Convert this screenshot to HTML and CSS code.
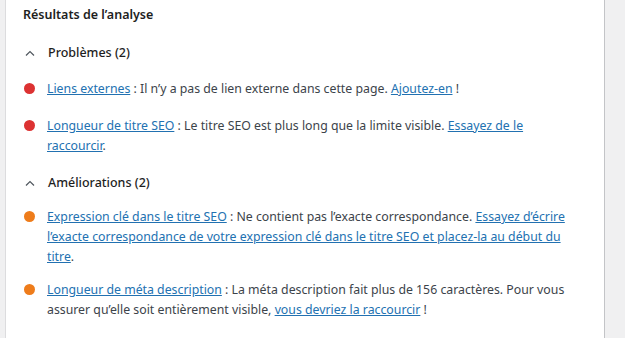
FILE: index.html
```html
<!DOCTYPE html>
<html lang="fr">
<head>
  <meta charset="UTF-8">
  <meta name="viewport" content="width=device-width, initial-scale=1.0">
  <title>Résultats de l’analyse</title>
  <link rel="stylesheet" href="styles.css">
</head>
<body>
  <div class="panel">
    <h2 class="panel-title">Résultats de l’analyse</h2>

    <div class="group">
      <div class="group-head">
        <svg class="chevron" width="10" height="6" viewBox="0 0 10 6"><path d="M1 5.5 5 1.5 9 5.5" fill="none" stroke="#50575e" stroke-width="1.2"/></svg>
        <span>Problèmes (2)</span>
      </div>
      <ul class="results">
        <li class="result">
          <span class="dot bad"></span>
          <p><a href="#">Liens externes</a> : Il n’y a pas de lien externe dans cette page. <a href="#">Ajoutez-en</a> !</p>
        </li>
        <li class="result">
          <span class="dot bad"></span>
          <p><a href="#">Longueur de titre SEO</a> : Le titre SEO est plus long que la limite visible. <a href="#">Essayez de le raccourcir</a>.</p>
        </li>
      </ul>
    </div>

    <div class="group">
      <div class="group-head">
        <svg class="chevron" width="10" height="6" viewBox="0 0 10 6"><path d="M1 5.5 5 1.5 9 5.5" fill="none" stroke="#50575e" stroke-width="1.2"/></svg>
        <span>Améliorations (2)</span>
      </div>
      <ul class="results">
        <li class="result">
          <span class="dot ok"></span>
          <p><a href="#">Expression clé dans le titre SEO</a> : Ne contient pas l’exacte correspondance. <a href="#">Essayez d’écrire l’exacte correspondance de votre expression clé dans le titre SEO et placez-la au début du titre</a>.</p>
        </li>
        <li class="result">
          <span class="dot ok"></span>
          <p><a href="#">Longueur de méta description</a> : La méta description fait plus de 156 caractères. Pour vous assurer qu’elle soit entièrement visible, <a href="#">vous devriez la raccourcir</a> !</p>
        </li>
      </ul>
    </div>
  </div>
</body>
</html>
```

FILE: styles.css
```css
* {
  margin: 0;
  padding: 0;
  box-sizing: border-box;
}

body {
  background-color: #f0f0f1;
  color: #3c434a;
  font-family: 'Noto Sans', sans-serif;
  font-size: 12.3px;
  line-height: 20px;
  padding: 0 20px 0 5px;
  height: 338px;
  overflow: hidden;
}

.panel {
  background: #fff;
  border-left: 1px solid #dcdcde;
  border-right: 1px solid #c3c4c7;
  min-height: 338px;
  padding: 5px 38px 0 17px;
}

.panel-title {
  font-size: 12.5px;
  font-weight: 600;
  color: #1e1e1e;
  line-height: 20px;
  margin-bottom: 18px;
}

.group-head {
  display: flex;
  align-items: center;
  gap: 13px;
  color: #1e1e1e;
  font-size: 12.5px;
  font-weight: 500;
  padding-left: 2px;
  margin-bottom: 16px;
}

.results {
  list-style: none;
}

.result {
  display: flex;
  align-items: flex-start;
  gap: 12px;
  margin-bottom: 17px;
}

.group:first-of-type .result:last-child {
  margin-bottom: 17px;
}

.group:last-of-type .group-head {
  margin-bottom: 14px;
}

.group:last-of-type .result {
  margin-bottom: 13px;
}

.result p {
  flex: 1;
}

.dot {
  flex: none;
  width: 11px;
  height: 11px;
  border-radius: 50%;
  margin: 4px 0 0 1px;
}

.dot.bad {
  background: #dc3232;
}

.dot.ok {
  background: #ee7c1b;
}

a {
  color: #2271b1;
  text-decoration: underline;
}
```
